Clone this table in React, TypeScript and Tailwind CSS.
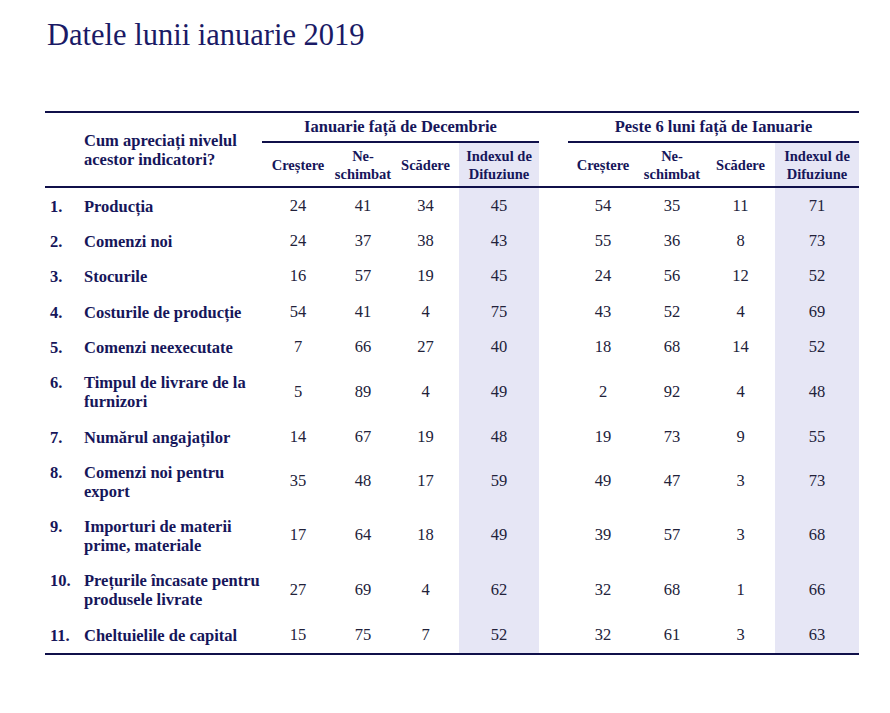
const navy = "text-[#16165a]";

type Row = {
  n: string;
  label: string[];
  a: number[];
  b: number[];
  h: string;
};

const rows: Row[] = [
  { n: "1.", label: ["Producția"], a: [24, 41, 34, 45], b: [54, 35, 11, 71], h: "h-[36px]" },
  { n: "2.", label: ["Comenzi noi"], a: [24, 37, 38, 43], b: [55, 36, 8, 73], h: "h-[35px]" },
  { n: "3.", label: ["Stocurile"], a: [16, 57, 19, 45], b: [24, 56, 12, 52], h: "h-[35px]" },
  { n: "4.", label: ["Costurile de producție"], a: [54, 41, 4, 75], b: [43, 52, 4, 69], h: "h-[36px]" },
  { n: "5.", label: ["Comenzi neexecutate"], a: [7, 66, 27, 40], b: [18, 68, 14, 52], h: "h-[35px]" },
  { n: "6.", label: ["Timpul de livrare de la", "furnizori"], a: [5, 89, 4, 49], b: [2, 92, 4, 48], h: "h-[54px]" },
  { n: "7.", label: ["Numărul angajaților"], a: [14, 67, 19, 48], b: [19, 73, 9, 55], h: "h-[36px]" },
  { n: "8.", label: ["Comenzi noi pentru", "export"], a: [35, 48, 17, 59], b: [49, 47, 3, 73], h: "h-[53px]" },
  { n: "9.", label: ["Importuri de materii", "prime, materiale"], a: [17, 64, 18, 49], b: [39, 57, 3, 68], h: "h-[55px]" },
  { n: "10.", label: ["Prețurile încasate pentru", "produsele livrate"], a: [27, 69, 4, 62], b: [32, 68, 1, 66], h: "h-[54px]" },
  { n: "11.", label: ["Cheltuielile de capital"], a: [15, 75, 7, 52], b: [32, 61, 3, 63], h: "h-[36px]" },
];

const widthsA = ["w-[72px]", "w-[58px]", "w-[67px]", "w-[80px]"];
const widthsB = ["w-[70px]", "w-[68px]", "w-[69px]", "w-[84px]"];

function Cell({ w, shade, children }: { w: string; shade?: boolean; children: React.ReactNode }) {
  return (
    <div className={`${w} ${shade ? "bg-[#e6e6f5]" : ""} flex items-center justify-center text-center`}>
      {children}
    </div>
  );
}

function SubHeads({ widths }: { widths: string[] }) {
  const heads = [["Creștere"], ["Ne-", "schimbat"], ["Scădere"], ["Indexul de", "Difuziune"]];
  return (
    <div className="flex h-[43px] text-[14.5px] font-bold leading-[18px]">
      {heads.map((h, i) => (
        <Cell key={i} w={widths[i]} shade={i === 3}>
          <div>
            {h.map((l) => (
              <div key={l}>{l}</div>
            ))}
          </div>
        </Cell>
      ))}
    </div>
  );
}

function Group({ title, width, widths }: { title: string; width: string; widths: string[] }) {
  return (
    <div className={`${width} flex flex-col`}>
      <div className="h-[28px] flex items-center justify-center text-[16.5px] font-bold">{title}</div>
      <div className="h-[2px] bg-[#10104a]" />
      <SubHeads widths={widths} />
    </div>
  );
}

export default function App() {
  return (
    <div className={`w-[890px] h-[713px] bg-white ${navy}`} style={{ fontFamily: '"Liberation Serif", "Times New Roman", serif' }}>
      <h1 className="pt-[20px] pl-[47px] text-[30.5px] leading-[30px] font-normal text-[#1a1a66]">
        Datele lunii ianuarie 2019
      </h1>

      <div className="ml-[45px] mt-[61px] w-[814px]">
        {/* header */}
        <div className="border-t-2 border-b-2 border-[#10104a] flex">
          <div className="w-[217px] pl-[39px] flex items-center text-[16.5px] font-bold leading-[19px]">
            <div>
              <div>Cum apreciați nivelul</div>
              <div>acestor indicatori?</div>
            </div>
          </div>
          <Group title="Ianuarie față de Decembrie" width="w-[277px]" widths={widthsA} />
          <div className="w-[29px]" />
          <Group title="Peste 6 luni față de Ianuarie" width="w-[291px]" widths={widthsB} />
        </div>

        {/* body */}
        <div className="border-b-2 border-[#10104a]">
          {rows.map((r) => (
            <div key={r.n} className={`flex ${r.h}`}>
              <div className="w-[217px] flex items-center text-[16.5px] font-bold leading-[19px] whitespace-nowrap">
                <div className="flex">
                  <div className="w-[39px] pl-[5px]">{r.n}</div>
                  <div>
                    {r.label.map((l) => (
                      <div key={l}>{l}</div>
                    ))}
                  </div>
                </div>
              </div>
              {r.a.map((v, i) => (
                <Cell key={"a" + i} w={widthsA[i]} shade={i === 3}>
                  <span className="text-[16.5px] text-[#22223a]">{v}</span>
                </Cell>
              ))}
              <div className="w-[29px]" />
              {r.b.map((v, i) => (
                <Cell key={"b" + i} w={widthsB[i]} shade={i === 3}>
                  <span className="text-[16.5px] text-[#22223a]">{v}</span>
                </Cell>
              ))}
            </div>
          ))}
        </div>
      </div>
    </div>
  );
}
